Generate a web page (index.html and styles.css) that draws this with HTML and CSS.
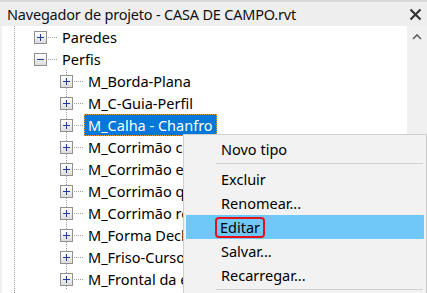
FILE: index.html
```html
<!DOCTYPE html>
<html>
<head>
<meta charset="utf-8">
<link rel="stylesheet" href="styles.css">
</head>
<body>
<div class="window">
  <div class="titlebar">
    <span class="title">Navegador de projeto - CASA DE CAMPO.rvt</span>
    <svg class="close" width="13" height="13" viewBox="0 0 13 13"><path d="M1.5 1.5 L11.5 11.5 M11.5 1.5 L1.5 11.5" stroke="#333" stroke-width="2.2" fill="none"/></svg>
  </div>
  <div class="content">
    <div class="tree">
      <div class="row l1"><span class="exp plus"></span><span class="conn"></span><span class="label">Paredes</span></div>
      <div class="row l1"><span class="exp minus"></span><span class="conn"></span><span class="label">Perfis</span></div>
      <div class="children">
        <div class="row l2"><span class="exp plus"></span><span class="conn"></span><span class="label">M_Borda-Plana</span></div>
        <div class="row l2"><span class="exp plus"></span><span class="conn"></span><span class="label">M_C-Guia-Perfil</span></div>
        <div class="row l2"><span class="exp plus"></span><span class="conn"></span><span class="label selected">M_Calha - Chanfro</span></div>
        <div class="row l2"><span class="exp plus"></span><span class="conn"></span><span class="label">M_Corrimão circular</span></div>
        <div class="row l2"><span class="exp plus"></span><span class="conn"></span><span class="label">M_Corrimão empilhado</span></div>
        <div class="row l2"><span class="exp plus"></span><span class="conn"></span><span class="label">M_Corrimão quadrado</span></div>
        <div class="row l2"><span class="exp plus"></span><span class="conn"></span><span class="label">M_Corrimão retangular</span></div>
        <div class="row l2"><span class="exp plus"></span><span class="conn"></span><span class="label">M_Forma Declive</span></div>
        <div class="row l2"><span class="exp plus"></span><span class="conn"></span><span class="label">M_Friso-Curso</span></div>
        <div class="row l2"><span class="exp plus"></span><span class="conn"></span><span class="label">M_Frontal da escada</span></div>
      </div>
    </div>
    <div class="scrollbar">
      <svg class="chev" width="10" height="7" viewBox="0 0 10 7"><path d="M1 6 L5 2 L9 6" stroke="#606060" stroke-width="1.6" fill="none"/></svg>
    </div>
  </div>
  <div class="menu">
    <div class="item">Novo tipo</div>
    <div class="sep"></div>
    <div class="item">Excluir</div>
    <div class="item">Renomear...</div>
    <div class="item hover"><span class="mark">Editar</span></div>
    <div class="item">Salvar...</div>
    <div class="item">Recarregar...</div>
    <div class="sep"></div>
  </div>
</div>
</body>
</html>
```
FILE: styles.css
```css
html, body {
  margin: 0;
  padding: 0;
  background: #f0f0f0;
}
.window {
  position: relative;
  width: 427px;
  height: 293px;
  overflow: hidden;
  background: #f0f0f0;
  font-family: "Noto Sans", "Open Sans", sans-serif;
  font-size: 14.5px;
  color: #000;
  display: flex;
  flex-direction: column;
}
.titlebar {
  height: 24px;
  border-top: 2px solid #d8d8d8;
  background: #eeeeee;
  display: flex;
  align-items: center;
  padding-left: 7px;
  padding-right: 5px;
  flex: none;
}
.title {
  flex: 1;
  line-height: 20px;
  white-space: nowrap;
  color: #111;
  letter-spacing: -0.2px;
  margin-top: -1px;
}
.close {
  display: block;
  margin-top: 1px;
}
.content {
  flex: 1;
  display: flex;
  padding-left: 2px;
  min-height: 0;
}
.tree {
  flex: 1;
  background-color: #fff;
  background-image: linear-gradient(to bottom, #a0a0a0 50%, transparent 50%);
  background-size: 1px 2px;
  background-position: 12px 0;
  background-repeat: repeat-y;
}
.children {
  background-image: linear-gradient(to bottom, #a0a0a0 50%, transparent 50%);
  background-size: 1px 2px;
  background-position: 64px 0;
  background-repeat: repeat-y;
}
.row {
  height: 22px;
  display: flex;
  align-items: center;
  white-space: nowrap;
}
.row.l1 { padding-left: 32px; }
.row.l2 { padding-left: 58px; }
.exp {
  position: relative;
  flex: none;
  width: 13px;
  height: 13px;
  box-sizing: border-box;
  border: 1px solid #919191;
  background: linear-gradient(to bottom, #ffffff, #dcdcdc);
}
.exp::before {
  content: "";
  position: absolute;
  left: 2px;
  top: 5px;
  width: 7px;
  height: 1px;
  background: #1f3f8f;
}
.exp.plus::after {
  content: "";
  position: absolute;
  left: 5px;
  top: 2px;
  width: 1px;
  height: 7px;
  background: #1f3f8f;
}
.conn {
  flex: none;
  width: 10px;
  height: 1px;
  margin-left: 1px;
  background-image: linear-gradient(to right, #a0a0a0 50%, transparent 50%);
  background-size: 2px 1px;
}
.label {
  line-height: 20px;
  border: 1px solid transparent;
  padding: 0 3px;
}
.label.selected {
  background: #0078d7;
  color: #fff;
  border: 1px dotted #f0a040;
}
.scrollbar {
  width: 20px;
  flex: none;
  background: #f0f0f0;
  display: flex;
  justify-content: center;
  align-items: flex-start;
}
.chev {
  display: block;
  margin-top: 7px;
}
.menu {
  position: absolute;
  left: 183px;
  top: 134px;
  width: 244px;
  box-sizing: border-box;
  border: 1px solid #cfcfcf;
  background: #f2f2f2;
  padding: 2px 2px 0 2px;
}
.item {
  height: 24px;
  line-height: 24px;
  padding-left: 35px;
  white-space: nowrap;
  display: flex;
  align-items: center;
}
.item.hover {
  background: #70c8f8;
}
.sep {
  height: 1px;
  background: #d2d2d2;
  margin: 2px 1px 3px 30px;
}
.mark {
  display: block;
  line-height: 17px;
  border: 2px solid #e5121c;
  border-radius: 4px;
  padding: 0 3px;
  margin-left: -6px;
}
```
